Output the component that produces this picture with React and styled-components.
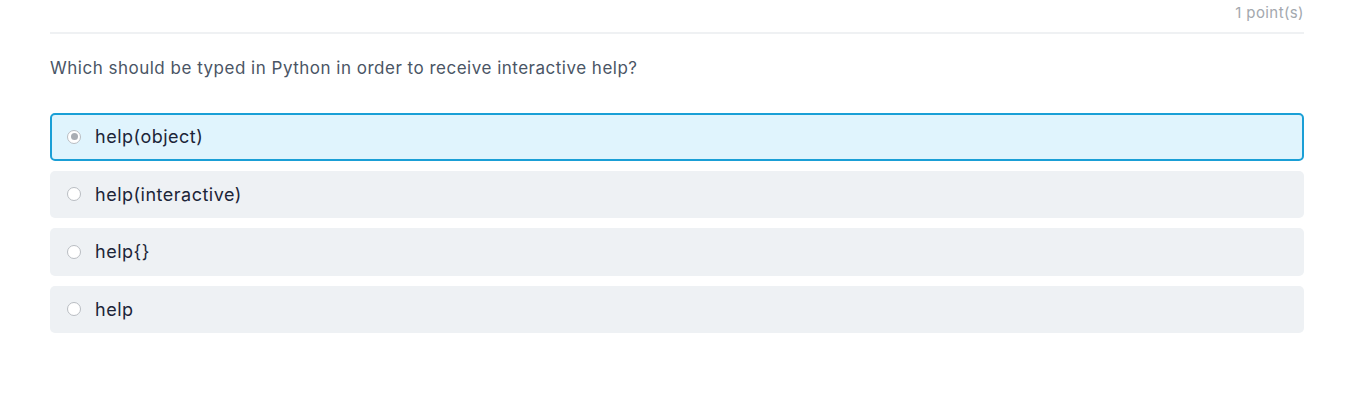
import React from "react";
import styled, { createGlobalStyle } from "styled-components";

const Global = createGlobalStyle`
  html, body { margin: 0; padding: 0; background: #fff; }
  body { font-family: Inter, "Open Sans", sans-serif; }
`;

const Page = styled.div`
  padding: 0 51px 0 50px;
`;

const Header = styled.div`
  display: flex;
  justify-content: flex-end;
  height: 34px;
  box-sizing: border-box;
  padding-top: 3px;
  border-bottom: 2px solid #eff1f3;
  font-size: 15px;
  letter-spacing: 0.4px;
  line-height: 20px;
  color: #a3a8ae;
`;

const Question = styled.p`
  margin: 22px 0 0;
  font-size: 17px;
  letter-spacing: 0.5px;
  line-height: 24px;
  color: #4a5565;
`;

const Options = styled.div`
  display: flex;
  flex-direction: column;
  gap: 10px;
  margin-top: 33px;
`;

const Option = styled.label`
  display: flex;
  align-items: center;
  gap: 14px;
  height: 47.5px;
  box-sizing: border-box;
  padding: 0 0 0 15px;
  border-radius: 5px;
  border: 2px solid ${p => (p.$selected ? "#1a9fd6" : "transparent")};
  background: ${p => (p.$selected ? "#e0f4fd" : "#eef1f4")};
  font-size: 18px;
  letter-spacing: 0.5px;
  color: #1c2538;
  cursor: pointer;
`;

const Radio = styled.span`
  width: 14px;
  height: 14px;
  box-sizing: border-box;
  border-radius: 50%;
  border: 1.5px solid #b9bdc2;
  background: #fff;
  display: flex;
  align-items: center;
  justify-content: center;
  flex: none;
  &::after {
    content: "";
    width: 7px;
    height: 7px;
    border-radius: 50%;
    background: ${p => (p.$checked ? "#a9adb3" : "transparent")};
  }
`;

const options = ["help(object)", "help(interactive)", "help{}", "help"];

export default function App() {
  return (
    <Page>
      <Global />
      <Header>1 point(s)</Header>
      <Question>Which should be typed in Python in order to receive interactive help?</Question>
      <Options>
        {options.map((o, i) => (
          <Option key={o} $selected={i === 0}>
            <Radio $checked={i === 0} />
            {o}
          </Option>
        ))}
      </Options>
    </Page>
  );
}
